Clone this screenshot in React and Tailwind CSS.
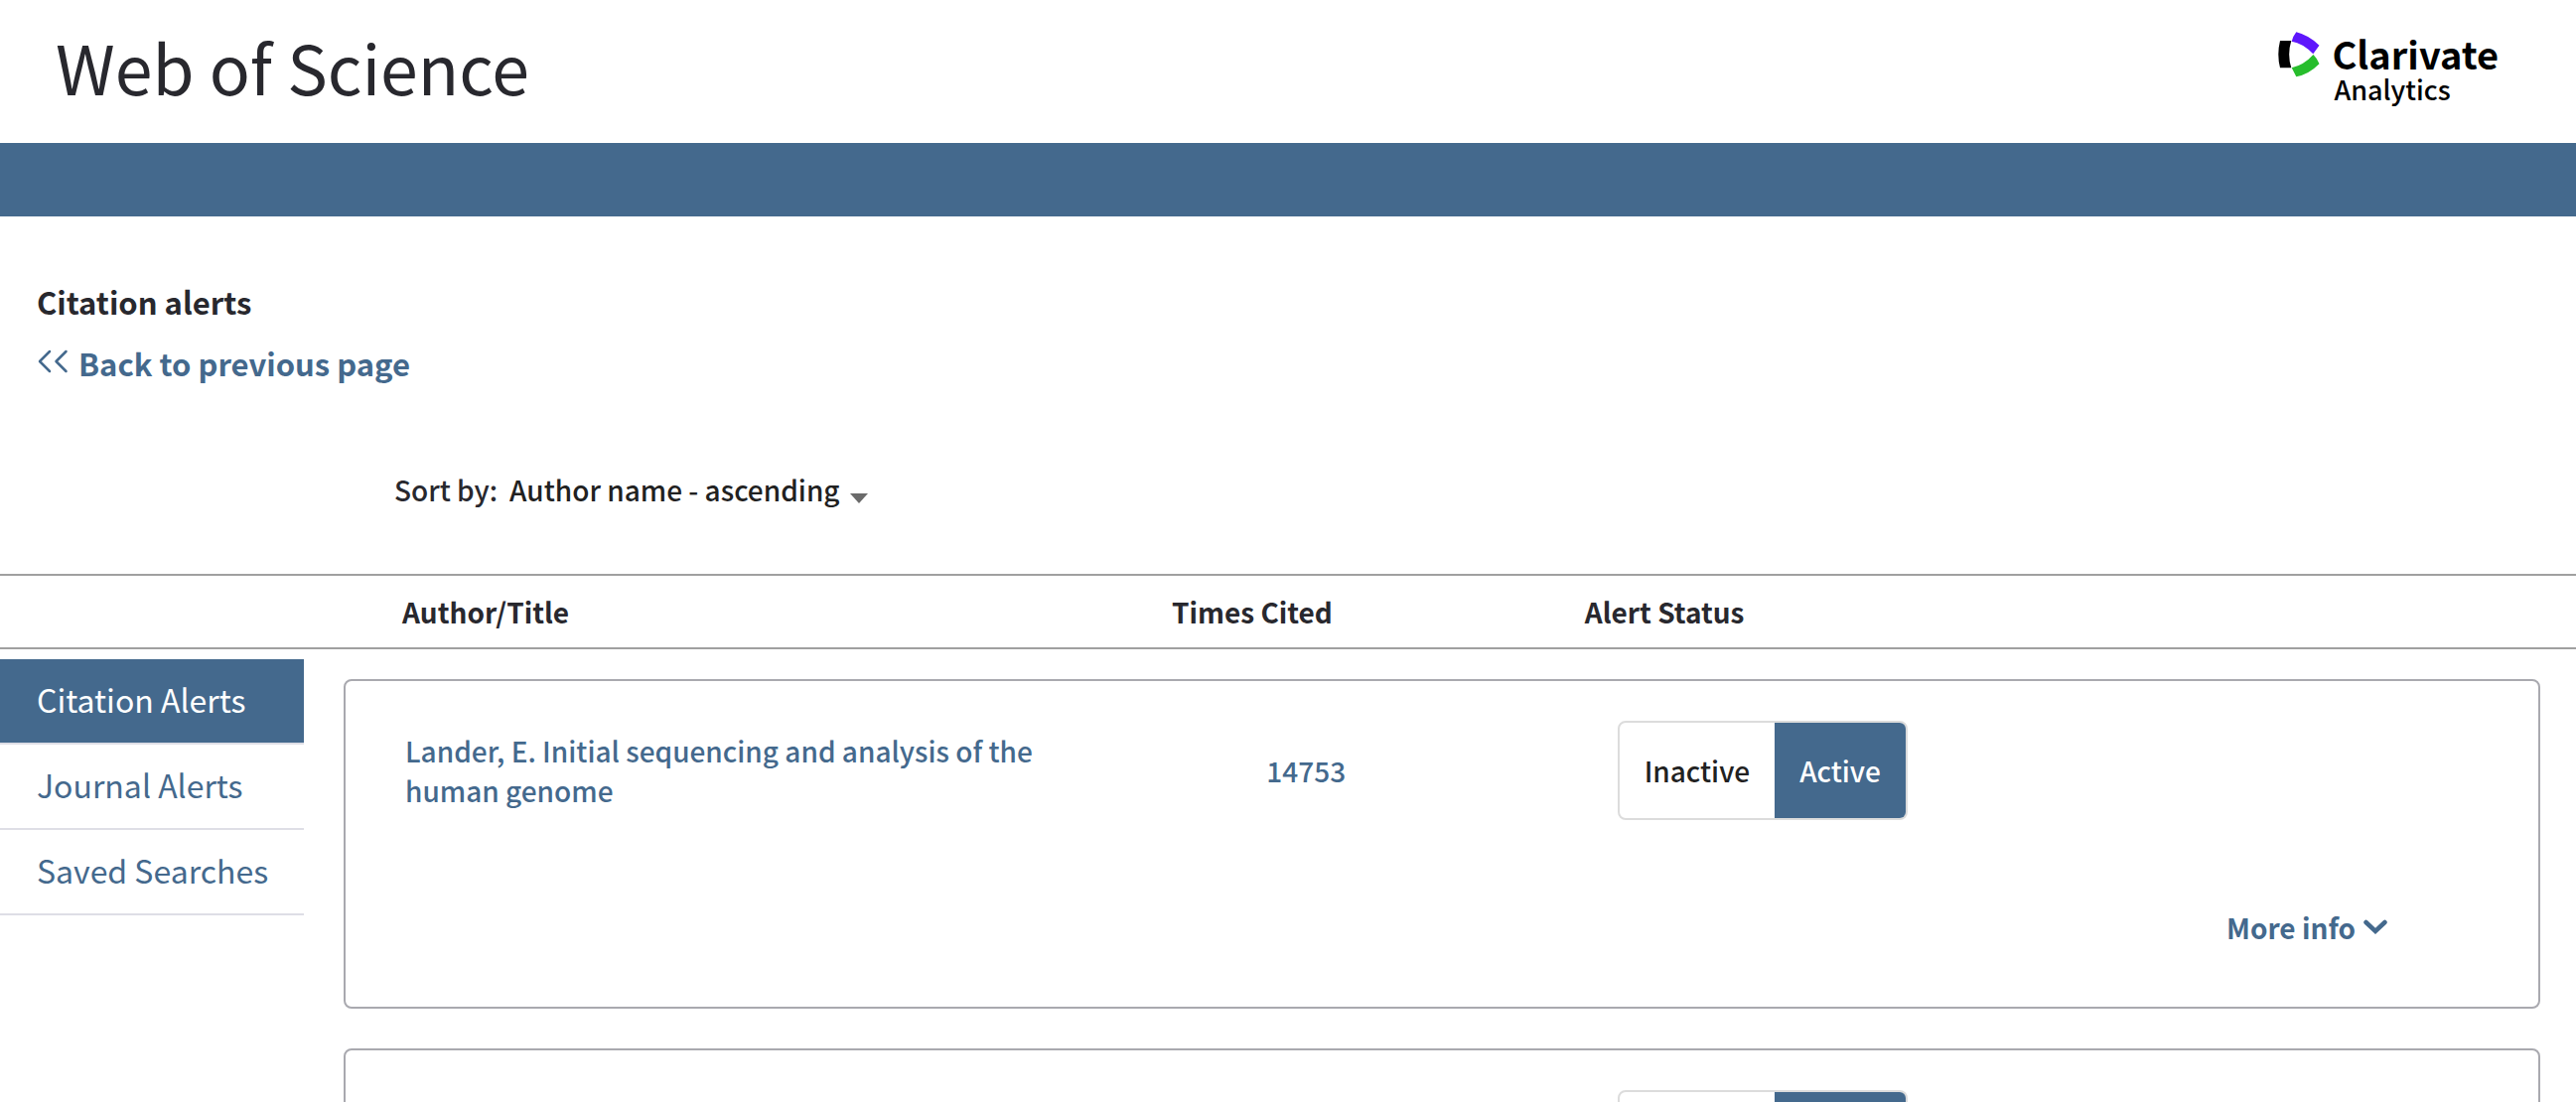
import { useState } from 'react';

const navItems = [
  { id: 'citation', label: 'Citation Alerts' },
  { id: 'journal', label: 'Journal Alerts' },
  { id: 'searches', label: 'Saved Searches' },
];

const initialAlerts = [
  {
    id: 1,
    title: 'Lander, E. Initial sequencing and analysis of the human genome',
    timesCited: 14753,
    active: true,
  },
  {
    id: 2,
    title: 'Venter, J. The sequence of the human genome',
    timesCited: 9012,
    active: true,
  },
];

function ClarivateLogo() {
  return (
    <div className="flex items-start">
      <svg className="w-[42px] h-[46px] mt-8 mr-3" viewBox="0 0 42 46" aria-hidden="true">
        <path d="M2 9H13.3Q9 23 13.3 36.3H2Q-1.400 23 2 9Z" fill="#000000" />
        <path d="M18.300 0.300Q31 3.500 41.500 13.700L35.300 22.300Q25 11.500 13.700 9.700Q15 4.500 18.300 0.300Z" fill="#5e16fc" />
        <path d="M35.500 23Q39.500 27 41.500 32.300Q31 43 18.300 45.300L13.700 36.300Q26 33.500 35.500 23Z" fill="#27bd2c" />
      </svg>
      <div className="mt-9 text-black">
        <div className="text-[38px] leading-9 font-bold">Clarivate</div>
        <div className="pl-[2px] text-[27px] leading-9 font-medium">Analytics</div>
      </div>
    </div>
  );
}

function StatusToggle({ active, onChange }) {
  return (
    <div className="flex h-[100px] border-2 border-[#dcdcdc] rounded-lg overflow-hidden">
      <button
        onClick={() => onChange(false)}
        aria-pressed={!active}
        className={active ? 'px-[25px] text-[#212121]' : 'px-[25px] bg-[#44698d] text-white'}
      >
        Inactive
      </button>
      <button
        onClick={() => onChange(true)}
        aria-pressed={active}
        className={active ? 'px-[25px] bg-[#44698d] text-white' : 'px-[25px] text-[#212121]'}
      >
        Active
      </button>
    </div>
  );
}

function AlertCard({ alert, onToggle }) {
  return (
    <li className="border-2 border-[#a9a9af] rounded-lg pt-10 pb-15">
      <div className="flex items-center">
        <div className="w-[42%] pl-15 pr-50">
          <a href="#record" className="text-[#44698d]">{alert.title}</a>
        </div>
        <div className="w-[16%]">
          <a href="#citing" className="text-[#44698d]">{alert.timesCited}</a>
        </div>
        <StatusToggle active={alert.active} onChange={(active) => onToggle(alert.id, active)} />
      </div>
      <div className="mt-[88px] pr-38 flex justify-end">
        <button className="flex items-center gap-2 font-bold text-[#44698d]">
          More info
          <svg className="w-6 h-4" viewBox="0 0 24 16" fill="none" aria-hidden="true">
            <path d="M2.500 3L12 12L21.500 3" stroke="currentColor" strokeWidth="4.500" strokeLinecap="round" />
          </svg>
        </button>
      </div>
    </li>
  );
}

export default function App() {
  const [alerts, setAlerts] = useState(initialAlerts);
  const [section, setSection] = useState('citation');
  const [sortBy, setSortBy] = useState('author-asc');

  const handleToggle = (id, active) => {
    setAlerts(alerts.map((a) => (a.id === id ? { ...a, active } : a)));
  };

  return (
    <div className="h-screen overflow-y-auto [scrollbar-width:none] bg-white font-['Noto_Sans_CJK_SC','Noto_Sans',sans-serif] text-[28px] leading-10 font-medium text-[#28282e]">
      <header className="flex justify-between h-36 pl-14 pr-[78px]">
        <h1 className="text-[68px] leading-[134px] font-normal">Web of Science</h1>
        <ClarivateLogo />
      </header>
      <div className="h-[74px] bg-[#44698d]" />

      <div className="pt-[66px] pl-[37px]">
        <h2 className="text-[31px] leading-10 font-bold">Citation alerts</h2>
        <a href="#back" className="mt-[22px] flex w-fit items-center gap-[10px] text-[31px] leading-10 font-bold text-[#44698d]">
          <svg className="w-8 h-8" viewBox="0 0 32 32" fill="none" aria-hidden="true">
            <path d="M13 4L3 14L13 24M29.500 4L19.500 14L29.500 24" stroke="currentColor" strokeWidth="2.500" strokeLinecap="round" strokeLinejoin="round" />
          </svg>
          Back to previous page
        </a>
      </div>

      <div className="mt-[87px] mb-[65px] pl-[397px] flex">
        <label htmlFor="sort" className="mr-3">Sort by:</label>
        <select
          id="sort"
          value={sortBy}
          onChange={(e) => setSortBy(e.target.value)}
          className="appearance-none field-sizing-content h-10 text-[#212121]"
        >
          <option value="author-asc">Author name - ascending</option>
          <option value="author-desc">Author name - descending</option>
        </select>
        <svg className="w-[18px] h-[10px] mt-6 ml-[10px] pointer-events-none" viewBox="0 0 18 10" aria-hidden="true">
          <path d="M0 0H18L9 10Z" fill="#6b6b6b" />
        </svg>
      </div>

      <div className="flex border-y-2 border-[#a0a0a0] py-4 pl-[405px] font-bold">
        <div className="w-[35.4%]">Author/Title</div>
        <div className="w-[19%]">Times Cited</div>
        <div>Alert Status</div>
      </div>

      <div className="flex items-start">
        <nav className="w-[306px] shrink-0 mt-[10px]">
          {navItems.map((item) => (
            <a
              key={item.id}
              href={`#${item.id}`}
              onClick={() => setSection(item.id)}
              className={
                section === item.id
                  ? 'block pt-5 pb-6 pl-[37px] text-[32px] leading-10 font-normal border-b-2 border-[#dedee6] bg-[#44698d] text-white'
                  : 'block pt-5 pb-6 pl-[37px] text-[32px] leading-10 font-normal border-b-2 border-[#dedee6] text-[#44698d]'
              }
            >
              {item.label}
            </a>
          ))}
        </nav>
        <ul className="flex-1 mt-[30px] ml-10 mr-9 flex flex-col gap-10">
          {alerts.map((alert) => (
            <AlertCard key={alert.id} alert={alert} onToggle={handleToggle} />
          ))}
        </ul>
      </div>
    </div>
  );
}
